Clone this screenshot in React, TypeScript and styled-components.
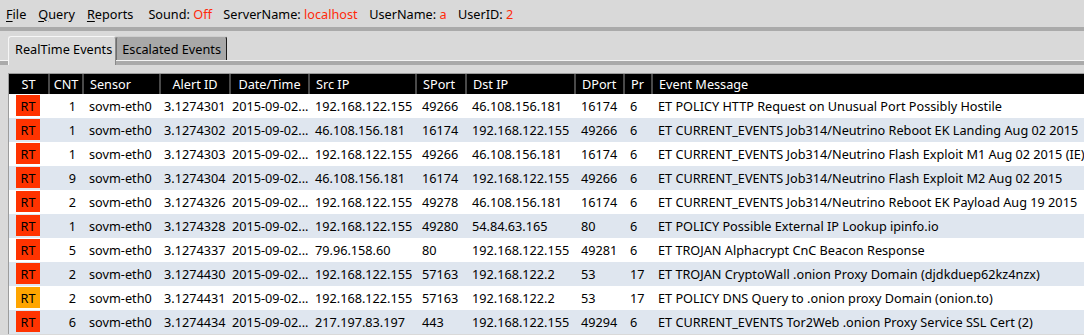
import styled, { createGlobalStyle } from "styled-components";

const GlobalStyle = createGlobalStyle`
  html, body {
    margin: 0;
    padding: 0;
    background: #d9d9d9;
    overflow: hidden;
  }
  body {
    font-family: "Noto Sans", "Open Sans", sans-serif;
    font-size: 12.7px;
    color: #000;
  }
`;

type Row = {
  st: "red" | "orange";
  cnt: number;
  alert: string;
  src: string;
  sport: string;
  dst: string;
  dport: string;
  pr: string;
  msg: string;
};

const rows: Row[] = [
  { st: "red", cnt: 1, alert: "3.1274301", src: "192.168.122.155", sport: "49266", dst: "46.108.156.181", dport: "16174", pr: "6", msg: "ET POLICY HTTP Request on Unusual Port Possibly Hostile" },
  { st: "red", cnt: 1, alert: "3.1274302", src: "46.108.156.181", sport: "16174", dst: "192.168.122.155", dport: "49266", pr: "6", msg: "ET CURRENT_EVENTS Job314/Neutrino Reboot EK Landing Aug 02 2015" },
  { st: "red", cnt: 1, alert: "3.1274303", src: "192.168.122.155", sport: "49266", dst: "46.108.156.181", dport: "16174", pr: "6", msg: "ET CURRENT_EVENTS Job314/Neutrino Flash Exploit M1 Aug 02 2015 (IE)" },
  { st: "red", cnt: 9, alert: "3.1274304", src: "46.108.156.181", sport: "16174", dst: "192.168.122.155", dport: "49266", pr: "6", msg: "ET CURRENT_EVENTS Job314/Neutrino Flash Exploit M2 Aug 02 2015" },
  { st: "red", cnt: 2, alert: "3.1274326", src: "192.168.122.155", sport: "49278", dst: "46.108.156.181", dport: "16174", pr: "6", msg: "ET CURRENT_EVENTS Job314/Neutrino Reboot EK Payload Aug 19 2015" },
  { st: "red", cnt: 1, alert: "3.1274328", src: "192.168.122.155", sport: "49280", dst: "54.84.63.165", dport: "80", pr: "6", msg: "ET POLICY Possible External IP Lookup ipinfo.io" },
  { st: "red", cnt: 5, alert: "3.1274337", src: "79.96.158.60", sport: "80", dst: "192.168.122.155", dport: "49281", pr: "6", msg: "ET TROJAN Alphacrypt CnC Beacon Response" },
  { st: "red", cnt: 2, alert: "3.1274430", src: "192.168.122.155", sport: "57163", dst: "192.168.122.2", dport: "53", pr: "17", msg: "ET TROJAN CryptoWall .onion Proxy Domain (djdkduep62kz4nzx)" },
  { st: "orange", cnt: 2, alert: "3.1274431", src: "192.168.122.155", sport: "57163", dst: "192.168.122.2", dport: "53", pr: "17", msg: "ET POLICY DNS Query to .onion proxy Domain (onion.to)" },
  { st: "red", cnt: 6, alert: "3.1274434", src: "217.197.83.197", sport: "443", dst: "192.168.122.155", dport: "49294", pr: "6", msg: "ET CURRENT_EVENTS Tor2Web .onion Proxy Service SSL Cert (2)" },
];

// column widths of the alert grid, shared by header and rows
const COLS = "39px 34px 77px 70px 79px 107px 50px 109px 49px 28px 1fr";

const MenuBar = styled.div`
  height: 27px;
  display: flex;
  align-items: center;
  padding-left: 6px;
  white-space: nowrap;
`;

const MenuItem = styled.span`
  margin-right: 12px;
  u { text-decoration: underline; text-underline-offset: 2px; }
`;

const Status = styled.span<{ $first?: boolean }>`
  margin-right: 11.5px;
  margin-left: ${(p) => (p.$first ? "3px" : "0")};
`;

const Red = styled.span`
  color: #ff2a0a;
`;

const Separator = styled.div`
  height: 4px;
  background: #aaaaaa;
`;

const TabBar = styled.div`
  height: 29px;
  display: flex;
  align-items: flex-end;
  padding-left: 8px;
  border-bottom: 1px solid #f4f4f4;
`;

const Tab = styled.div<{ $active?: boolean }>`
  box-sizing: border-box;
  display: flex;
  align-items: center;
  white-space: nowrap;
  padding: 0 ${(p) => (p.$active ? "3px" : "5px")} 0 ${(p) => (p.$active ? "6px" : "5px")};
  border-top: 1px solid ${(p) => (p.$active ? "#f6f6f6" : "#cfcfcf")};
  border-left: 1px solid ${(p) => (p.$active ? "#f6f6f6" : "#6e6e6e")};
  border-right: 1px solid ${(p) => (p.$active ? "#8a8a8a" : "#1a1a1a")};
  border-top-left-radius: 3px;
  border-top-right-radius: 3px;
  background: ${(p) => (p.$active ? "#d9d9d9" : "#a8a8a8")};
  position: relative;
  z-index: ${(p) => (p.$active ? 2 : 1)};
  margin-bottom: ${(p) => (p.$active ? "-5px" : "0")};
  height: ${(p) => (p.$active ? "29px" : "24px")};
  padding-bottom: ${(p) => (p.$active ? "5px" : "0")};
`;

const PaneEdge = styled.div`
  height: 4px;
  background: #aaaaaa;
`;

const Pane = styled.div`
  padding: 8px 0 0 8px;
`;

const Table = styled.div`
  border-top: 1px solid #9c9c9c;
  border-left: 1px solid #9c9c9c;
  overflow: hidden;
`;

const HeaderRow = styled.div`
  display: grid;
  grid-template-columns: ${COLS};
  height: 20px;
  background: #000;
  color: #fff;
`;

const HeaderCell = styled.div<{ $center?: boolean }>`
  display: flex;
  align-items: center;
  justify-content: ${(p) => (p.$center ? "center" : "flex-start")};
  padding-left: ${(p) => (p.$center ? "0" : "6px")};
  border-left: 2px solid #4a4a4a;
  white-space: nowrap;
  overflow: hidden;
  &:first-child { border-left: none; }
`;

const DataRow = styled.div<{ $alt?: boolean }>`
  display: grid;
  grid-template-columns: ${COLS};
  height: 24px;
  background: ${(p) => (p.$alt ? "#dfe6ef" : "#ffffff")};
`;

const Cell = styled.div<{ $align?: "left" | "right"; $pad?: number }>`
  display: flex;
  align-items: center;
  justify-content: ${(p) => (p.$align === "right" ? "flex-end" : "flex-start")};
  padding-left: ${(p) => (p.$align === "right" ? 0 : p.$pad ?? 7)}px;
  padding-right: ${(p) => (p.$align === "right" ? 6 : 0)}px;
  white-space: nowrap;
  overflow: visible;
  min-width: 0;
`;

const Badge = styled.div<{ $tone: "red" | "orange" }>`
  width: 24px;
  height: 21px;
  margin: 1px 0 2px 0;
  display: flex;
  align-items: center;
  justify-content: center;
  background: ${(p) => (p.$tone === "orange" ? "#ffa500" : "#ff3300")};
`;

export default function App() {
  return (
    <>
      <GlobalStyle />
      <MenuBar>
        <MenuItem><u>F</u>ile</MenuItem>
        <MenuItem><u>Q</u>uery</MenuItem>
        <MenuItem><u>R</u>eports</MenuItem>
        <Status $first>Sound: <Red>Off</Red></Status>
        <Status>ServerName: <Red>localhost</Red></Status>
        <Status>UserName: <Red>a</Red></Status>
        <Status>UserID: <Red>2</Red></Status>
      </MenuBar>
      <Separator />
      <TabBar>
        <Tab $active>RealTime Events</Tab>
        <Tab>Escalated Events</Tab>
      </TabBar>
      <PaneEdge />
      <Pane>
        <Table>
          <HeaderRow>
            <HeaderCell $center>ST</HeaderCell>
            <HeaderCell $center>CNT</HeaderCell>
            <HeaderCell>Sensor</HeaderCell>
            <HeaderCell $center>Alert ID</HeaderCell>
            <HeaderCell $center>Date/Time</HeaderCell>
            <HeaderCell>Src IP</HeaderCell>
            <HeaderCell>SPort</HeaderCell>
            <HeaderCell>Dst IP</HeaderCell>
            <HeaderCell>DPort</HeaderCell>
            <HeaderCell>Pr</HeaderCell>
            <HeaderCell>Event Message</HeaderCell>
          </HeaderRow>
          {rows.map((r, i) => (
            <DataRow key={r.alert} $alt={i % 2 === 1}>
              <Cell>
                <Badge $tone={r.st}>RT</Badge>
              </Cell>
              <Cell $align="right">{r.cnt}</Cell>
              <Cell>sovm-eth0</Cell>
              <Cell $pad={5}>{r.alert}</Cell>
              <Cell $pad={3}>2015-09-02...</Cell>
              <Cell>{r.src}</Cell>
              <Cell>{r.sport}</Cell>
              <Cell>{r.dst}</Cell>
              <Cell>{r.dport}</Cell>
              <Cell>{r.pr}</Cell>
              <Cell>{r.msg}</Cell>
            </DataRow>
          ))}
        </Table>
      </Pane>
    </>
  );
}
